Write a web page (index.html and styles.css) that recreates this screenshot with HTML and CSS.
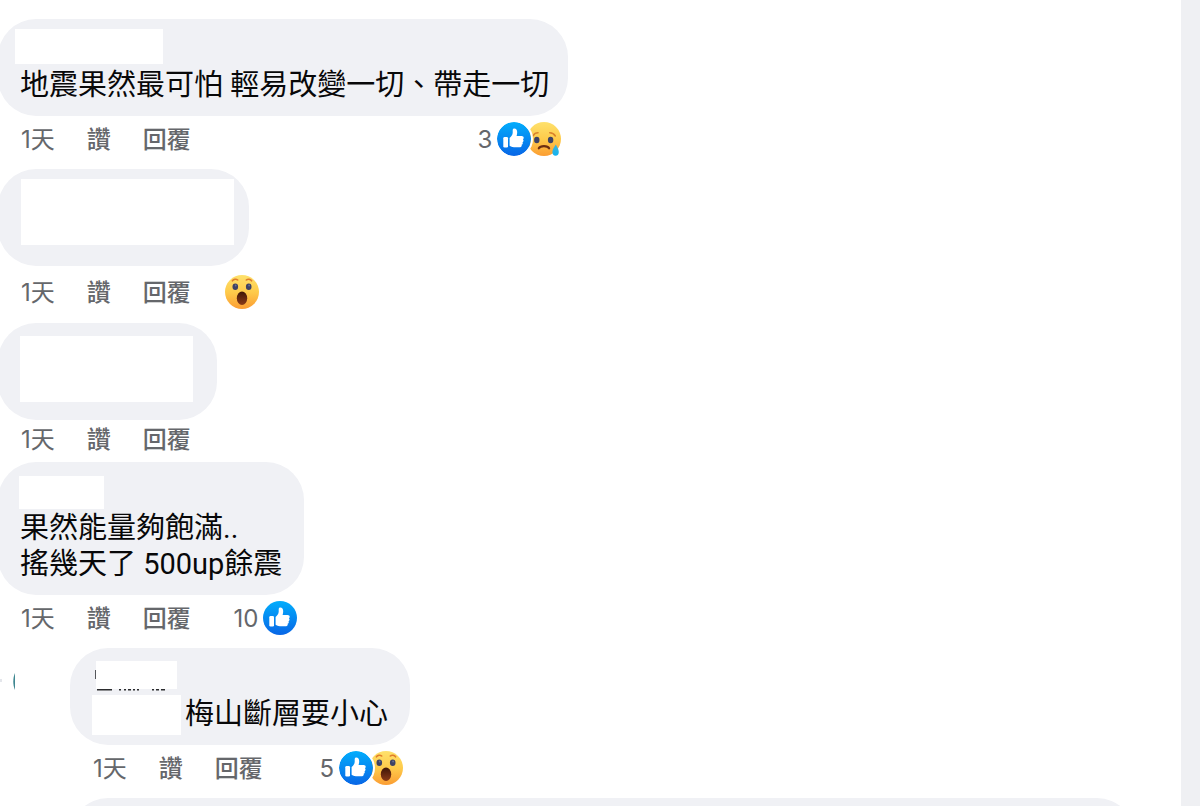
FILE: index.html
```
<!DOCTYPE html>
<html lang="zh-Hant">
<head>
<meta charset="utf-8">
<meta name="viewport" content="width=device-width, initial-scale=1">
<title>留言</title>
<link rel="stylesheet" href="styles.css">
</head>
<body>
<svg class="defs" aria-hidden="true">
  <defs>
    <linearGradient id="blue" x1="0" y1="0" x2="0" y2="1"><stop offset="0" stop-color="#02adfc"/><stop offset="1" stop-color="#0866e6"/></linearGradient>
    <linearGradient id="yellow" x1="0" y1="0" x2="0" y2="1"><stop offset="0" stop-color="#fee16c"/><stop offset=".5" stop-color="#fecb4b"/><stop offset="1" stop-color="#fb9d33"/></linearGradient>
    <linearGradient id="mouth" x1="0" y1="0" x2="0" y2="1"><stop offset="0" stop-color="#3f1608"/><stop offset="1" stop-color="#8a3a17"/></linearGradient>
    <linearGradient id="tear" x1="0" y1="0" x2="0" y2="1"><stop offset="0" stop-color="#3fb4d8"/><stop offset="1" stop-color="#12b3f2"/></linearGradient>
    <symbol id="like" viewBox="0 0 34 34">
      <circle cx="17" cy="17" r="17" fill="url(#blue)"/>
      <path fill="#fff" d="M7.600 15h2.100a1.300 1.300 0 0 1 1.300 1.300v7.900a1.300 1.300 0 0 1-1.300 1.300H7.600a1.300 1.300 0 0 1-1.300-1.300v-7.900A1.300 1.300 0 0 1 7.600 15z"/>
      <path fill="#fff" d="M12.600 16.100c1.800-1.600 3-3.200 3.100-5.300V8.200c0-1 .7-1.600 1.600-1.600 1.900 0 2.900 1.500 2.900 3.700 0 1.300-.3 2.500-.6 3.600h5c1.300 0 2.100.8 2.100 1.800 0 .7-.3 1.200-.8 1.500.5.4.7.9.6 1.500-.1.700-.4 1.200-1 1.500.3.400.4.900.2 1.500-.2.600-.6.900-1.100 1.100.2.400.2.700.1 1.100-.3.900-1.200 1.300-2.400 1.300h-3.600c-2.500 0-4.300-.5-6.100-1.500z"/>
    </symbol>
    <symbol id="wow" viewBox="0 0 34 34">
      <circle cx="17" cy="17" r="17" fill="url(#yellow)"/>
      <path d="M7.400 5.800c1.300-1.700 3.700-2.200 5.300-.8M21.300 5c1.600-1.400 4-.9 5.300.8" fill="none" stroke="#e07d2c" stroke-width="1.600" stroke-linecap="round"/>
      <ellipse cx="10.300" cy="11.800" rx="2.800" ry="3.300" fill="#3e4264"/>
      <ellipse cx="23.700" cy="11.800" rx="2.800" ry="3.300" fill="#3e4264"/>
      <circle cx="10.700" cy="10.500" r=".9" fill="#667096"/>
      <circle cx="24.100" cy="10.500" r=".9" fill="#667096"/>
      <ellipse cx="17" cy="23.200" rx="5.200" ry="6.700" fill="url(#mouth)"/>
    </symbol>
    <symbol id="sad" viewBox="0 0 34 34">
      <circle cx="17" cy="17" r="17" fill="url(#yellow)"/>
      <path d="M6.200 13.700c1-1.800 2.800-2.900 4.800-2.900M22.800 10.800c2.300.1 4.300 1.200 5.500 3.200" fill="none" stroke="#d9822b" stroke-width="1.600" stroke-linecap="round"/>
      <ellipse cx="9.800" cy="18" rx="2.700" ry="3.200" fill="#3e4264"/>
      <ellipse cx="23.600" cy="18" rx="2.700" ry="3.200" fill="#3e4264"/>
      <path d="M11.800 26.300c1.700-3 8.700-3 10.300 0" fill="none" stroke="#6b2d10" stroke-width="2.200" stroke-linecap="round"/>
      <path d="M28.800 22.500c1.500 2.600 3 5 3 7.500a3.200 3.700 0 0 1-6.400 0c0-2.500 1.700-4.900 3.400-7.500z" fill="url(#tear)"/>
    </symbol>
  </defs>
</svg>
<div class="page">
  <main class="thread">
    <article class="comment">
      <div class="bubble long">
        <div class="name"><span class="mask mask-name-long"></span></div>
        <p class="text">地震果然最可怕 輕易改變一切、帶走一切</p>
      </div>
      <footer class="actions">
        <a class="time" href="#">1天</a>
        <button class="action" type="button">讚</button>
        <button class="action" type="button">回覆</button>
        <span class="reactions">
          <span class="count">3</span>
          <svg class="icon front" role="img" aria-label="讚"><use href="#like"/></svg>
          <svg class="icon back" role="img" aria-label="嗚"><use href="#sad"/></svg>
        </span>
      </footer>
    </article>

    <article class="comment">
      <div class="bubble redacted"><div class="mask mask-wide"></div></div>
      <footer class="actions roomy">
        <a class="time" href="#">1天</a>
        <button class="action" type="button">讚</button>
        <button class="action" type="button">回覆</button>
        <span class="reactions outside">
          <svg class="icon" role="img" aria-label="哇"><use href="#wow"/></svg>
        </span>
      </footer>
    </article>

    <article class="comment">
      <div class="bubble redacted low"><div class="mask mask-medium"></div></div>
      <footer class="actions compact">
        <a class="time" href="#">1天</a>
        <button class="action" type="button">讚</button>
        <button class="action" type="button">回覆</button>
      </footer>
    </article>

    <article class="comment">
      <div class="bubble">
        <div class="name"><span class="mask mask-name-short"></span></div>
        <p class="text">果然能量夠飽滿..<br>搖幾天了 500up餘震</p>
      </div>
      <footer class="actions">
        <a class="time" href="#">1天</a>
        <button class="action" type="button">讚</button>
        <button class="action" type="button">回覆</button>
        <span class="reactions">
          <span class="count">10</span>
          <svg class="icon" role="img" aria-label="讚"><use href="#like"/></svg>
        </span>
      </footer>
    </article>

    <div class="reply">
      <div class="gutter">
        <svg class="avatar" viewBox="0 0 16 20" aria-hidden="true">
          <rect x="0" y="7" width="2" height="3" fill="#e4e6eb"/>
          <path d="M15 1c-2.300 5-2.300 12 0 17z" fill="#3f8791"/>
        </svg>
      </div>
      <article class="comment">
        <div class="bubble">
          <div class="name reply-name">
            <svg class="traces" viewBox="0 0 84 30" aria-hidden="true">
              <path d="M1.500 9v9" stroke="#55575b" stroke-width="1" fill="none"/>
              <path d="M3 28.500h15M25 28.500h2M30 28.500h2M34 28.500h3M39 28.500h2M43 28.500h2M58 28.500h2M62 28.500h3M67 28.500h4" stroke="#2b2c2e" stroke-width="2"/>
              <path fill="#fff" d="M2 0h81v28H2z"/>
            </svg>
          </div>
          <p class="text mention-line"><span class="mask mask-mention"></span>梅山斷層要小心</p>
        </div>
        <footer class="actions">
          <a class="time" href="#">1天</a>
          <button class="action" type="button">讚</button>
          <button class="action" type="button">回覆</button>
          <span class="reactions">
            <span class="count">5</span>
            <svg class="icon front" role="img" aria-label="讚"><use href="#like"/></svg>
            <svg class="icon back" role="img" aria-label="哇"><use href="#wow"/></svg>
          </span>
        </footer>
      </article>
    </div>

    <div class="reply">
      <div class="gutter"></div>
      <div class="bubble next"></div>
    </div>
  </main>
  <aside class="edge"></aside>
</div>
</body>
</html>
```
FILE: styles.css
```
* { box-sizing: border-box; }

body {
  margin: 0;
  background: #fff;
  color: #080809;
  font-family: Inter, "Noto Sans CJK TC", sans-serif;
}

.defs { position: absolute; width: 0; height: 0; }

.page { display: flex; height: 100vh; overflow: hidden; }
.thread { flex: 1; min-width: 0; padding-top: 19px; }
.edge { width: 19px; background: #eff0f3; }

.comment {
  display: flex;
  flex-direction: column;
  align-items: flex-start;
  width: fit-content;
  margin-left: -2px;
}

.bubble {
  padding: 12px 22px 13px 22px;
  border-radius: 38px;
  background: #f0f1f5;
}
.bubble.long { padding-right: 19px; }

.name { display: flex; height: 36px; }
.text {
  margin: 0;
  font-family: Roboto, "Noto Sans CJK TC", sans-serif;
  font-size: 29px;
  line-height: 36px;
  white-space: nowrap;
}

.mask { display: block; background: #fff; }
.mask-name-long { width: 148px; height: 35px; margin: -2px 0 0 -5px; }
.mask-name-short { width: 85px; height: 33px; margin: 2px 0 0 -1px; }
.mask-wide { width: 213px; height: 66px; }
.mask-medium { width: 173px; height: 66px; }
.mask-mention { width: 89px; height: 40px; margin: -1px 0 -3px; }

.redacted { min-height: 97px; padding: 10px 15px 0 23px; }
.redacted.low { padding: 13px 24px 0 22px; }

.actions {
  display: flex;
  align-items: center;
  align-self: stretch;
  padding: 6px 7px 13px 23px;
  color: #65676b;
  font-size: 24px;
  line-height: 32px;
}
.actions.roomy { padding: 9px 0 14px 23px; }
.actions.compact { padding: 2px 0 6px 23px; }

.time, .action, .count { padding: 2px 0 0; }
.time { color: inherit; text-decoration: none; }
.action {
  margin: 0 0 0 32px;
  border: 0;
  background: none;
  color: inherit;
  font: inherit;
  font-weight: 500;
}

.reactions { display: flex; align-items: center; margin-left: auto; }
.reactions.outside { margin-left: 34px; }
.count { margin-right: 5px; }
.icon { display: block; width: 34px; height: 34px; }
.icon.front { z-index: 1; border-radius: 50%; box-shadow: 0 0 0 2px #fff; }
.icon.back { margin-left: -4px; }

.reply { display: flex; }
.gutter { flex: none; width: 70px; padding-top: 24px; }
.avatar { display: block; width: 16px; height: 20px; }
.reply .comment { margin-left: 0; }
.reply-name { padding: 1px 0 0 2px; }
.traces { display: block; width: 84px; height: 30px; }
.mention-line { display: flex; align-items: flex-start; gap: 4px; }
.bubble.next { flex: 1; min-height: 97px; margin-right: 46px; }
```
